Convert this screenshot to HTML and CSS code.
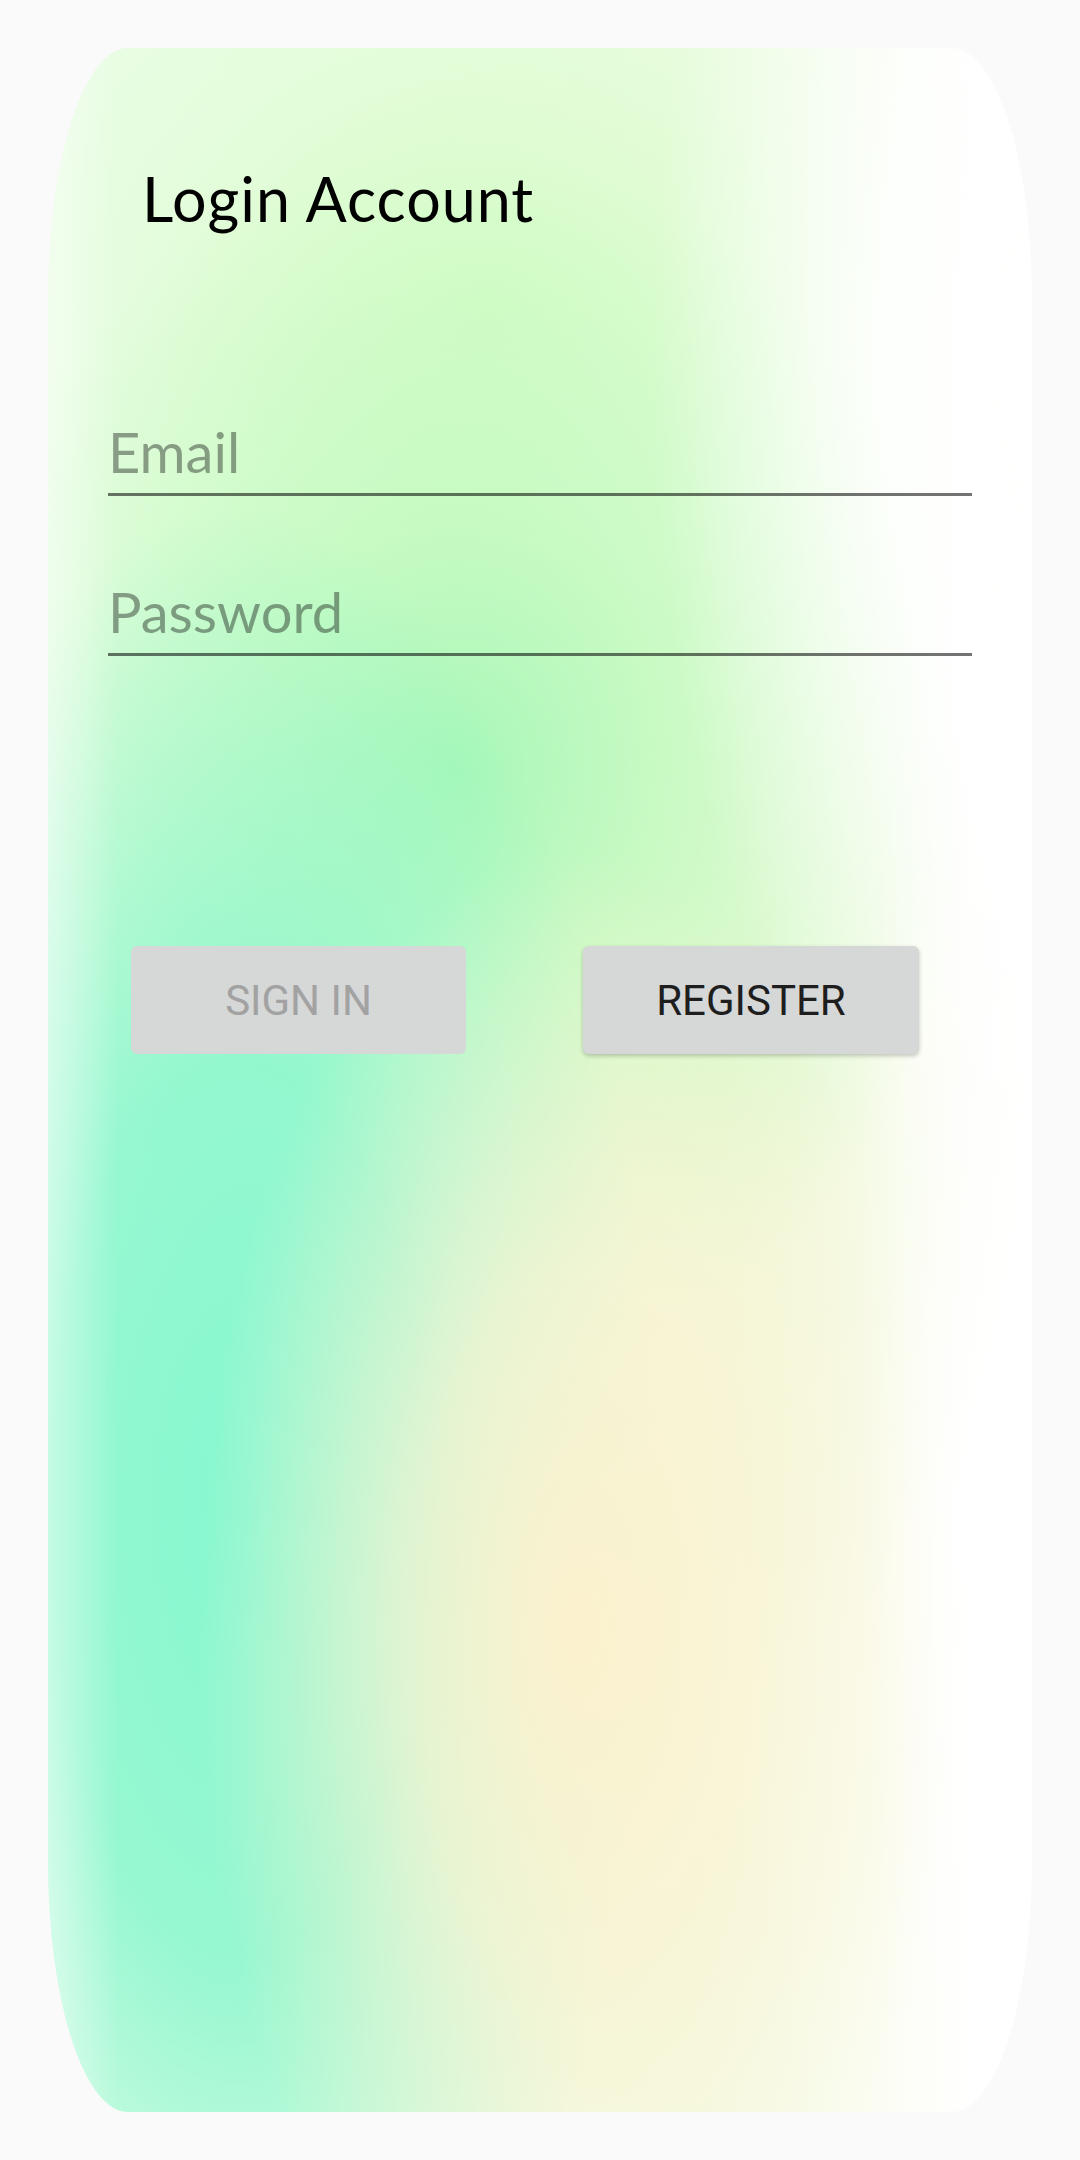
FILE: index.html
```html
<!DOCTYPE html>
<html lang="en">
<head>
<meta charset="utf-8">
<title>Login Account</title>
<link rel="stylesheet" href="styles.css">
</head>
<body>
  <main class="card">
    <h1 class="title">Login Account</h1>
    <form class="form">
      <input class="field" type="email" placeholder="Email">
      <input class="field" type="password" placeholder="Password">
    </form>
    <div class="actions">
      <button class="btn btn-disabled" type="button" disabled>SIGN IN</button>
      <button class="btn btn-primary" type="button">REGISTER</button>
    </div>
  </main>
</body>
</html>
```
FILE: styles.css
```css
html, body {
  margin: 0;
  padding: 0;
  background: #fafafa;
}

body {
  font-family: "Lato", "Noto Sans", "Liberation Sans", sans-serif;
}

.card {
  box-sizing: border-box;
  width: 984px;
  height: 2064px;
  margin: 48px;
  padding: 114px 60px 0 60px;
  border-radius: 80px / 250px;
  display: flex;
  flex-direction: column;
  background:
    linear-gradient(90deg, rgba(255, 255, 255, 0.45) 0px, rgba(255, 255, 255, 0) 70px),
    radial-gradient(ellipse 380px 900px at 984px 300px, rgba(255, 255, 255, 1) 0%, rgba(255, 255, 255, 0.85) 40%, rgba(255, 255, 255, 0) 100%),
    radial-gradient(ellipse 180px 900px at 984px 1300px, rgba(255, 255, 255, 0.9) 0%, rgba(255, 255, 255, 0) 100%),
    radial-gradient(ellipse 380px 780px at 530px 1580px, rgba(252, 241, 206, 1) 0%, rgba(250, 243, 210, 0.75) 45%, rgba(250, 244, 214, 0) 100%),
    radial-gradient(ellipse 420px 1000px at 190px 1460px, rgba(134, 248, 208, 1) 0%, rgba(138, 247, 205, 0.88) 45%, rgba(150, 246, 200, 0) 100%),
    radial-gradient(ellipse 520px 620px at 410px 720px, rgba(168, 247, 184, 1) 0%, rgba(192, 250, 190, 0.8) 40%, rgba(215, 252, 205, 0) 100%),
    radial-gradient(ellipse 330px 600px at 660px 1050px, rgba(238, 248, 214, 0.9) 0%, rgba(240, 249, 220, 0) 100%),
    radial-gradient(ellipse 700px 560px at 440px 260px, rgba(214, 252, 200, 1) 0%, rgba(222, 253, 212, 0.6) 50%, rgba(230, 253, 222, 0) 100%),
    linear-gradient(90deg, #eefdec 0%, #edfce2 40%, #f3fbe5 65%, #fbfdf3 84%, #ffffff 94%);
}

.title {
  margin: 0 0 0 34px;
  font-size: 61px;
  line-height: 73px;
  font-weight: 400;
  letter-spacing: 1px;
  color: #000;
}

.form {
  margin: 183px 0 0 0;
  display: flex;
  flex-direction: column;
  gap: 82px;
}

.field {
  box-sizing: content-box;
  display: block;
  width: 100%;
  height: 68px;
  margin: 0;
  padding: 0 0 7px 0;
  border: 0;
  border-bottom: 3px solid rgba(0, 0, 0, 0.55);
  background: transparent;
  outline: none;
  font-family: "Lato", "Noto Sans", sans-serif;
  font-size: 56px;
  line-height: 68px;
  color: #222;
}

.field::placeholder {
  color: rgba(0, 0, 0, 0.38);
  opacity: 1;
}

.actions {
  margin: 290px 0 0 23px;
  display: flex;
  gap: 117px;
}

.btn {
  width: 336px;
  height: 108px;
  border: 0;
  border-radius: 6px;
  background: #d6d7d7;
  font-family: "Roboto", "Liberation Sans", sans-serif;
  font-size: 42px;
  font-weight: 400;
  padding: 0;
}

.btn-disabled {
  width: 335px;
  color: #a2a2a2;
}

.btn-primary {
  color: #1e1e1e;
  box-shadow: 0 2px 4px rgba(0, 0, 0, 0.22);
}
```
